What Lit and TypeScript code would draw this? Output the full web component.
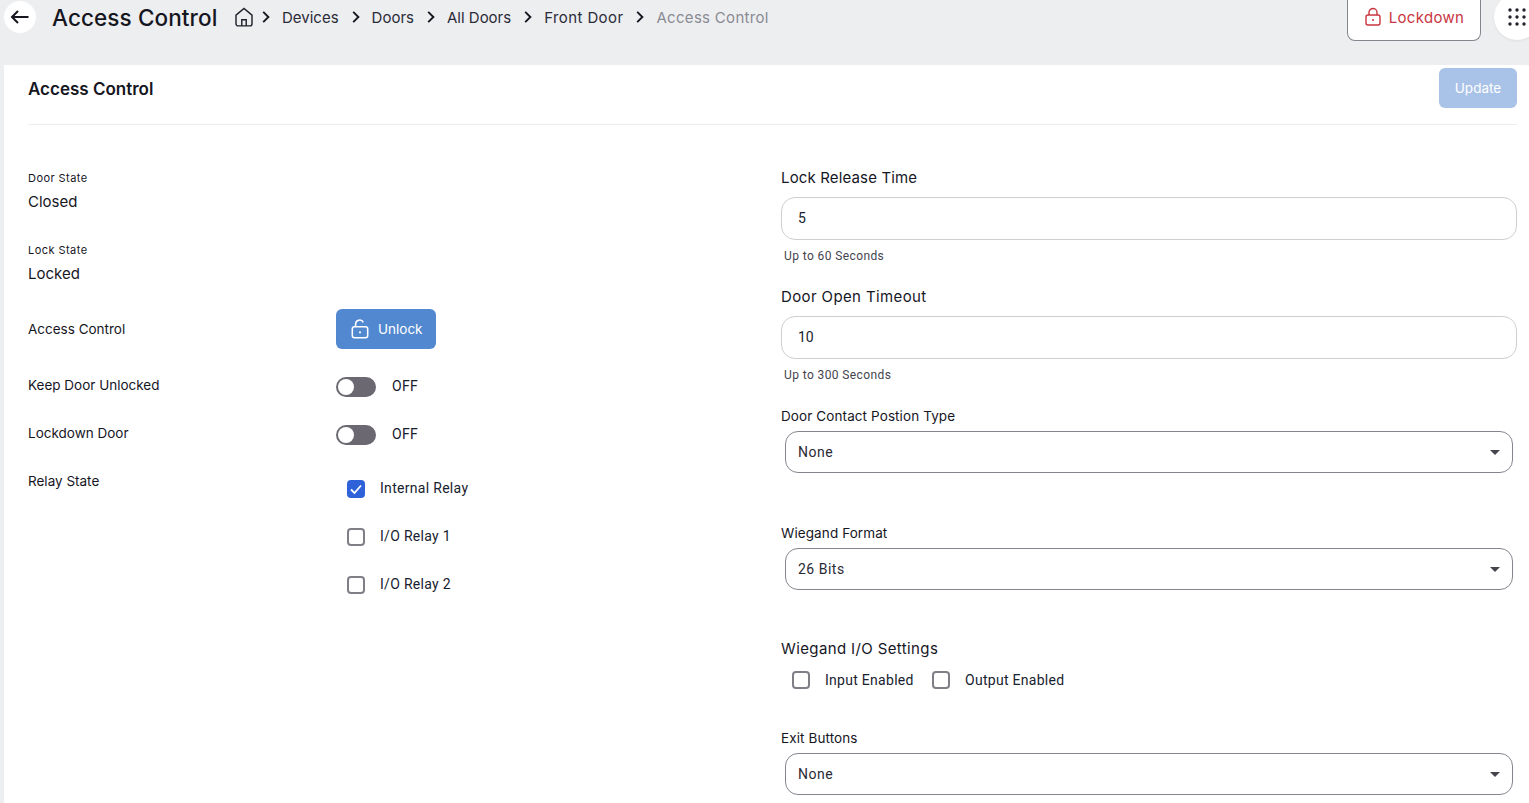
import { LitElement, html, css, svg } from "lit";
import { customElement } from "lit/decorators.js";

const chev = html`<svg class="chev" viewBox="0 0 10 12" width="10" height="12"><path d="M2.2 .8 7.4 6l-5.2 5.2" fill="none" stroke="#16161f" stroke-width="1.9"/></svg>`;
const lock = (color: string, open: boolean, w = 18, h = 20) => html`<svg viewBox="0 0 18 20" width=${w} height=${h} fill="none" stroke=${color} stroke-width="1.4">
  <rect x="2" y="8" width="14" height="10" rx="2"/>
  ${open ? svg`<path d="M5 8V5.5a3.7 3.7 0 0 1 7-1.6"/>` : svg`<path d="M5 8V5.5a4 4 0 0 1 8 0V8"/>`}
  <circle cx="9" cy="13" r="1" fill=${color} stroke="none"/></svg>`;

@customElement("app-root")
export class AppRoot extends LitElement {
  static styles = css`
    :host { display: block; width: 1529px; height: 803px; overflow: hidden; background: #edeef0; font-family: "Inter", sans-serif; color: #16161f; }
    .top { height: 65px; display: flex; align-items: flex-start; box-sizing: border-box; padding: 1px 0 0 4px; }
    .back { width: 32px; height: 32px; border-radius: 50%; background: #fff; display: flex; align-items: center; justify-content: center; flex: none; }
    h1 { margin: 0 0 0 16px; font: 500 22.5px/34px "Inter", sans-serif; letter-spacing: 0.1px; width: 165px; white-space: nowrap; }
    .crumbs { display: flex; align-items: center; height: 32px; font-size: 15px; color: #2b2b38; margin-left: 17px; white-space: nowrap; }
    .chev { margin: 0 11px 0 12px; flex: none; }
    .home { flex: none; margin-right: -5px; }
    .muted { color: #8a8a94; letter-spacing: .3px; }
    .wide-crumb { letter-spacing: .4px; }
    .end { margin-left: auto; display: flex; align-items: flex-start; }
    .lockdown { margin-top: -1px; width: 134px; height: 41px; box-sizing: border-box; border: 1px solid #84848c; border-top: none; border-radius: 0 0 8px 8px; background: #fff; color: #c9363f; font-size: 15px; letter-spacing: .3px; display: flex; align-items: center; justify-content: center; gap: 7px; padding: 0 0 6px 0; }
    .grid-btn { width: 46px; height: 46px; border-radius: 50%; background: #fff; margin: -7px -11px 0 13px; box-shadow: 0 1px 3px #0001; display: flex; align-items: center; padding-left: 13px; box-sizing: border-box; flex: none; }
    .panel { background: #fff; margin-left: 4px; height: 738px; padding: 0 12px 0 24px; }
    .head { height: 60px; box-sizing: border-box; border-bottom: 1px solid #eceded; display: flex; justify-content: space-between; padding-top: 3px; }
    h2 { margin: 0; font: 600 17px/42px "Inter", sans-serif; }
    .update { width: 78px; height: 40px; border-radius: 6px; background: #a9c2e7; color: #fff; font-size: 13.5px; display: flex; align-items: center; justify-content: center; padding-bottom: 1px; box-sizing: border-box; }
    .cols { display: flex; }
    .left { width: 753px; flex: none; padding-top: 46px; font-size: 13.5px; }
    .right { flex: 1; padding-top: 43px; }
    .state { height: 72px; }
    .state.last { height: 66px; }
    .small { font-size: 11px; line-height: 14px; letter-spacing: .45px; }
    .val { font-size: 15px; line-height: 20px; margin-top: 7px; }
    .row { display: grid; grid-template-columns: 308px 1fr; align-items: center; }
    .acc { height: 40px; }
    .btn { width: 100px; height: 40px; border-radius: 6px; background: #5288d0; color: #fff; display: flex; align-items: center; gap: 8px; padding-left: 14px; box-sizing: border-box; }
    .tog-row { height: 48px; }
    .tog-row.first { margin-top: 12px; }
    .tog-wrap { display: flex; align-items: center; gap: 16px; font: 14px Roboto, sans-serif; letter-spacing: .3px; color: #16202c; padding-top: 2px; }
    .toggle { width: 40px; height: 20px; border-radius: 10px; background: #6b6872; position: relative; box-sizing: border-box; margin-top: 2px; }
    .toggle::after { content: ""; position: absolute; left: 2px; top: 2px; width: 16px; height: 16px; border-radius: 50%; background: #fff; }
    .relay { display: grid; grid-template-columns: 308px 1fr; }
    .relay-label { padding-top: 16px; line-height: 16px; }
    .relay-list { padding: 0 0 0 11px; margin-top: 7px; }
    .check { display: flex; align-items: center; height: 48px; gap: 15px; font: 14px Roboto, sans-serif; letter-spacing: .3px; color: #17222e; }
    .box { width: 18px; height: 18px; box-sizing: border-box; border: 2px solid #7f7f88; border-radius: 4px; flex: none; margin-top: 2px; }
    .box.on { background: #2f62d9; border-color: #2f62d9; display: flex; align-items: center; justify-content: center; }
    .lab { font-size: 15px; line-height: 20px; letter-spacing: .15px; }
    .lab.wide { letter-spacing: .38px; }
    .lab2 { font-size: 13.5px; line-height: 18px; letter-spacing: .1px; }
    .input { height: 43px; box-sizing: border-box; border: 1px solid #cfcfd2; border-radius: 14px; margin-top: 9px; padding: 0 0 2px 16px; display: flex; align-items: center; font: 14px Roboto, sans-serif; color: #17222e; }
    .hint { font: 12px/16px Roboto, sans-serif; color: #44444f; margin: 8px 0 0 3px; letter-spacing: .4px; height: 39px; }
    .select { height: 42px; box-sizing: border-box; border: 1px solid #85858f; border-radius: 13px; margin: 6px 4px 0; padding: 0 12px; display: flex; align-items: center; justify-content: space-between; font: 14px Roboto, sans-serif; color: #2a2a35; letter-spacing: .5px; }
    .caret { width: 0; height: 0; border: 5px solid transparent; border-top-color: #45454e; border-bottom: none; }
    .f1 { margin-top: 1px; }
    .f2 { margin-top: 51px; }
    .f3 { margin-top: 49px; }
    .checks { display: flex; align-items: center; height: 32px; margin: 5px 0 0 11px; font: 14px Roboto, sans-serif; letter-spacing: .28px; color: #17222e; }
    .checks .box { margin-right: 15px; margin-top: 0; }
    .checks .t { width: 107px; }
    .f4 { margin-top: 33px; }
  `;

  render() {
    return html`
      <div class="top">
        <div class="back"><svg viewBox="0 0 20 16" width="20" height="16"><path d="M18.5 8H2M8 2 2 8l6 6" fill="none" stroke="#16161f" stroke-width="2"/></svg></div>
        <h1>Access Control</h1>
        <div class="crumbs">
          <svg class="home" viewBox="0 0 18 18" width="20" height="20" fill="none" stroke="#22222c" stroke-width="1.3"><path d="M1.8 7.3 9 1.3l7.2 6V15a2 2 0 0 1-2 2H3.8a2 2 0 0 1-2-2z"/><path d="M7 17v-5.5h4V17"/></svg>
          ${chev}<span>Devices</span>
          ${chev}<span>Doors</span>
          ${chev}<span>All Doors</span>
          ${chev}<span class="wide-crumb">Front Door</span>
          ${chev}<span class="muted">Access Control</span>
        </div>
        <div class="end">
          <div class="lockdown">${lock("#c9363f", false)}<span>Lockdown</span></div>
          <div class="grid-btn"><svg viewBox="0 0 20 20" width="20" height="20" fill="#22222c">
            ${[3, 10, 17].flatMap((y) => [3, 10, 17].map((x) => svg`<circle cx=${x} cy=${y} r="1.7"/>`))}
          </svg></div>
        </div>
      </div>
      <div class="panel">
        <div class="head"><h2>Access Control</h2><div class="update">Update</div></div>
        <div class="cols">
          <div class="left">
            <div class="state"><div class="small">Door State</div><div class="val">Closed</div></div>
            <div class="state last"><div class="small">Lock State</div><div class="val">Locked</div></div>
            <div class="row acc"><span>Access Control</span><div class="btn">${lock("#fff", true, 20, 22)}<span>Unlock</span></div></div>
            <div class="row tog-row first"><span>Keep Door Unlocked</span><div class="tog-wrap"><div class="toggle"></div>OFF</div></div>
            <div class="row tog-row"><span>Lockdown Door</span><div class="tog-wrap"><div class="toggle"></div>OFF</div></div>
            <div class="relay">
              <div class="relay-label">Relay State</div>
              <div class="relay-list">
                <div class="check"><div class="box on"><svg viewBox="0 0 14 14" width="14" height="14"><path d="M2 7.5 5.5 11 12 3.5" fill="none" stroke="#fff" stroke-width="1.8"/></svg></div>Internal Relay</div>
                <div class="check"><div class="box"></div>I/O Relay 1</div>
                <div class="check"><div class="box"></div>I/O Relay 2</div>
              </div>
            </div>
          </div>
          <div class="right">
            <div class="lab">Lock Release Time</div>
            <div class="input">5</div>
            <div class="hint">Up to 60 Seconds</div>
            <div class="lab wide">Door Open Timeout</div>
            <div class="input">10</div>
            <div class="hint">Up to 300 Seconds</div>
            <div class="lab2 f1">Door Contact Postion Type</div>
            <div class="select">None<span class="caret"></span></div>
            <div class="lab2 f2">Wiegand Format</div>
            <div class="select">26 Bits<span class="caret"></span></div>
            <div class="lab wide f3">Wiegand I/O Settings</div>
            <div class="checks"><div class="box"></div><span class="t">Input Enabled</span><div class="box"></div><span>Output Enabled</span></div>
            <div class="lab2 f4">Exit Buttons</div>
            <div class="select">None<span class="caret"></span></div>
          </div>
        </div>
      </div>
    `;
  }
}
